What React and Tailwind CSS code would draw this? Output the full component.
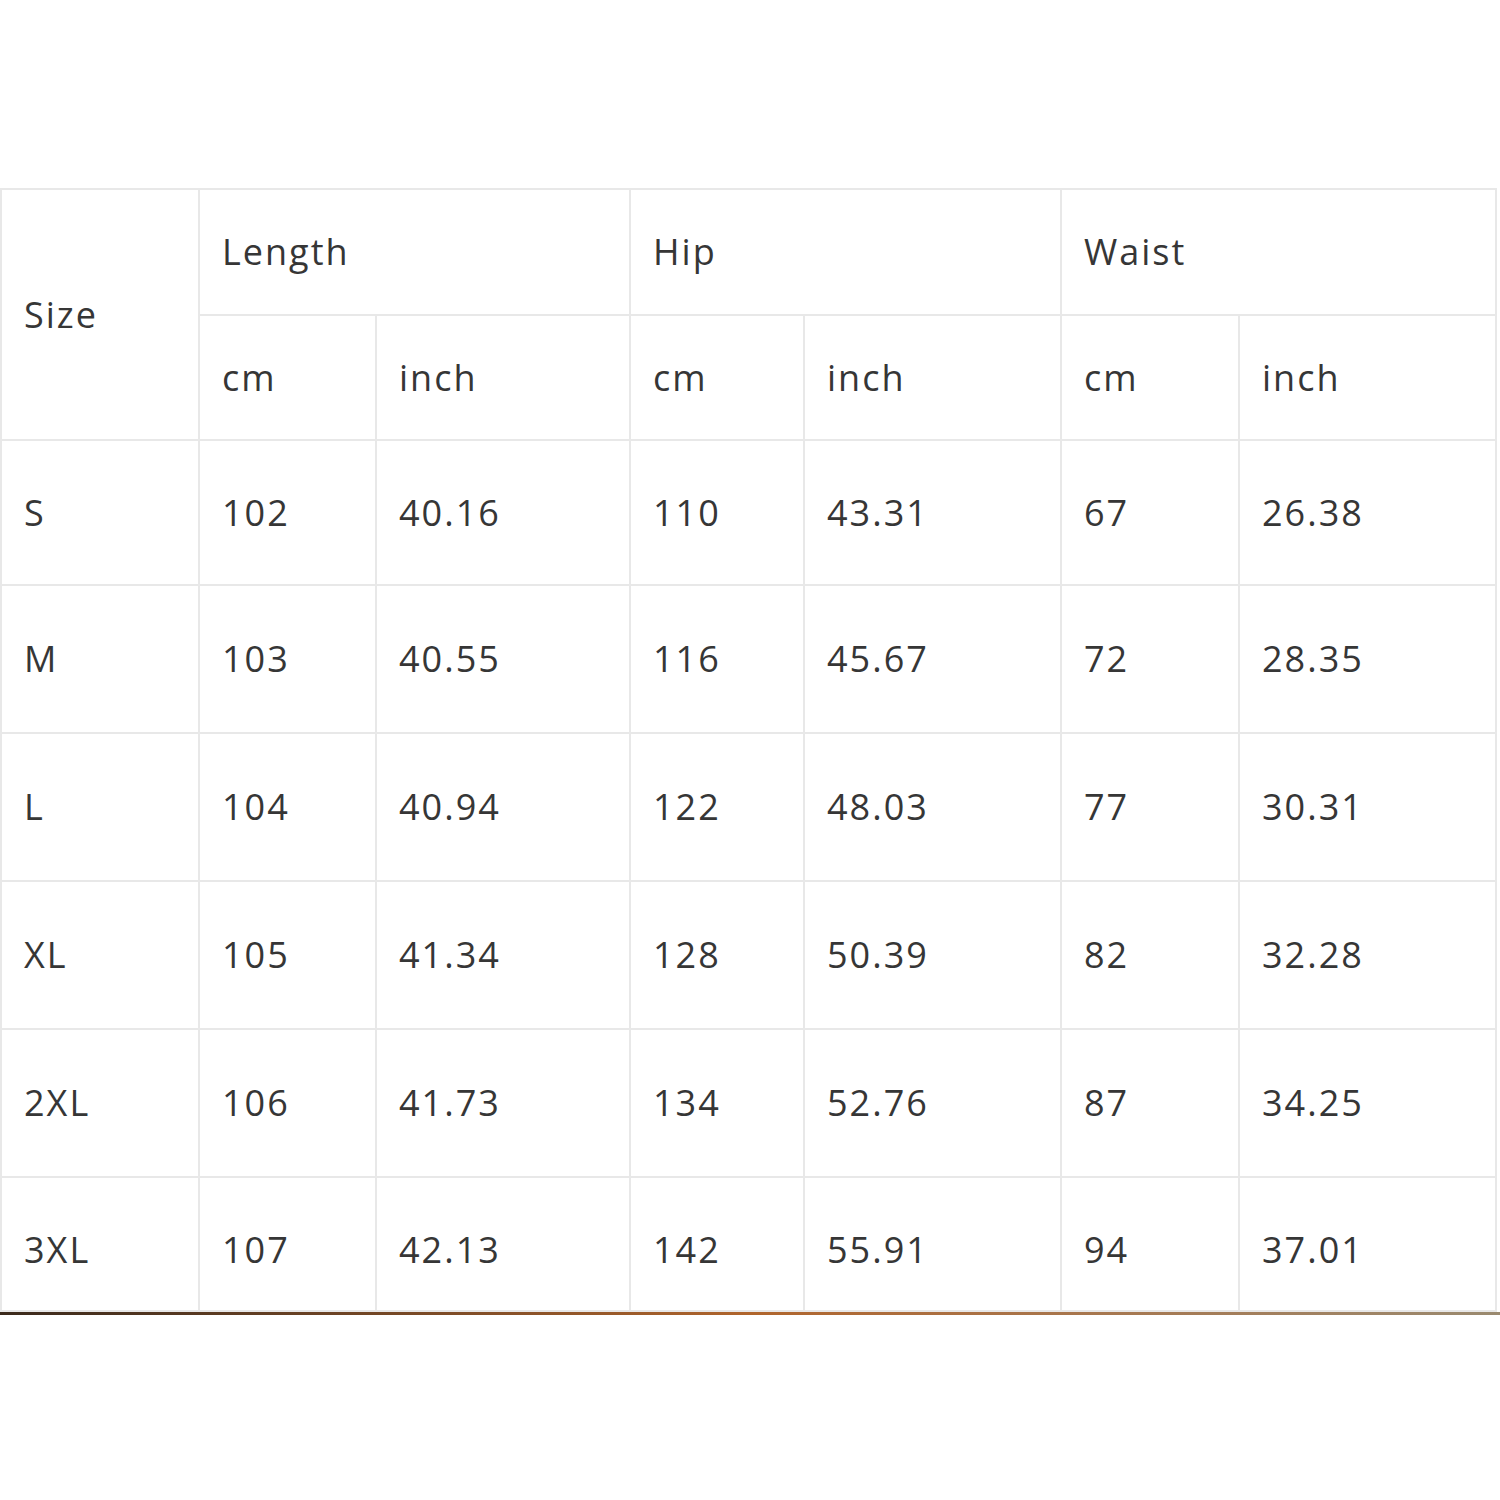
import React from 'react';

const ROWS = [
  ['S', '102', '40.16', '110', '43.31', '67', '26.38'],
  ['M', '103', '40.55', '116', '45.67', '72', '28.35'],
  ['L', '104', '40.94', '122', '48.03', '77', '30.31'],
  ['XL', '105', '41.34', '128', '50.39', '82', '32.28'],
  ['2XL', '106', '41.73', '134', '52.76', '87', '34.25'],
  ['3XL', '107', '42.13', '142', '55.91', '94', '37.01'],
];

const HEIGHTS = ['h-[145px]', 'h-[148px]', 'h-[148px]', 'h-[148px]', 'h-[148px]', 'h-[134px]'];

const cell = 'border-2 border-[#e8e8e8] pl-[22px] text-left align-middle font-normal';

export default function App() {
  return (
    <div className="w-[1500px] h-[1500px] bg-white pt-[188px]" style={{ fontFamily: '"Open Sans", "DejaVu Sans", sans-serif' }}>
      <table className="w-[1495px] table-fixed border-collapse text-[36px] tracking-[2px] text-[#363636]">
        <colgroup>
          <col className="w-[198px]" />
          <col className="w-[177px]" />
          <col className="w-[254px]" />
          <col className="w-[174px]" />
          <col className="w-[257px]" />
          <col className="w-[178px]" />
          <col className="w-[257px]" />
        </colgroup>
        <thead>
          <tr className="h-[126px]">
            <th rowSpan={2} className={cell}>Size</th>
            <th colSpan={2} className={cell}>Length</th>
            <th colSpan={2} className={cell}>Hip</th>
            <th colSpan={2} className={cell}>Waist</th>
          </tr>
          <tr className="h-[125px]">
            <th className={cell}>cm</th>
            <th className={cell}>inch</th>
            <th className={cell}>cm</th>
            <th className={cell}>inch</th>
            <th className={cell}>cm</th>
            <th className={cell}>inch</th>
          </tr>
        </thead>
        <tbody>
          {ROWS.map((r, i) => (
            <tr key={r[0]} className={HEIGHTS[i]}>
              {r.map((v, j) => (
                <td key={j} className={i === ROWS.length - 1 ? cell + ' pt-[12px]' : cell}>{v}</td>
              ))}
            </tr>
          ))}
        </tbody>
      </table>
      <div className="h-[3px] w-[1500px] bg-gradient-to-r from-[#3b2a1c] via-[#b0652c] to-[#9a8a70]" />
    </div>
  );
}
